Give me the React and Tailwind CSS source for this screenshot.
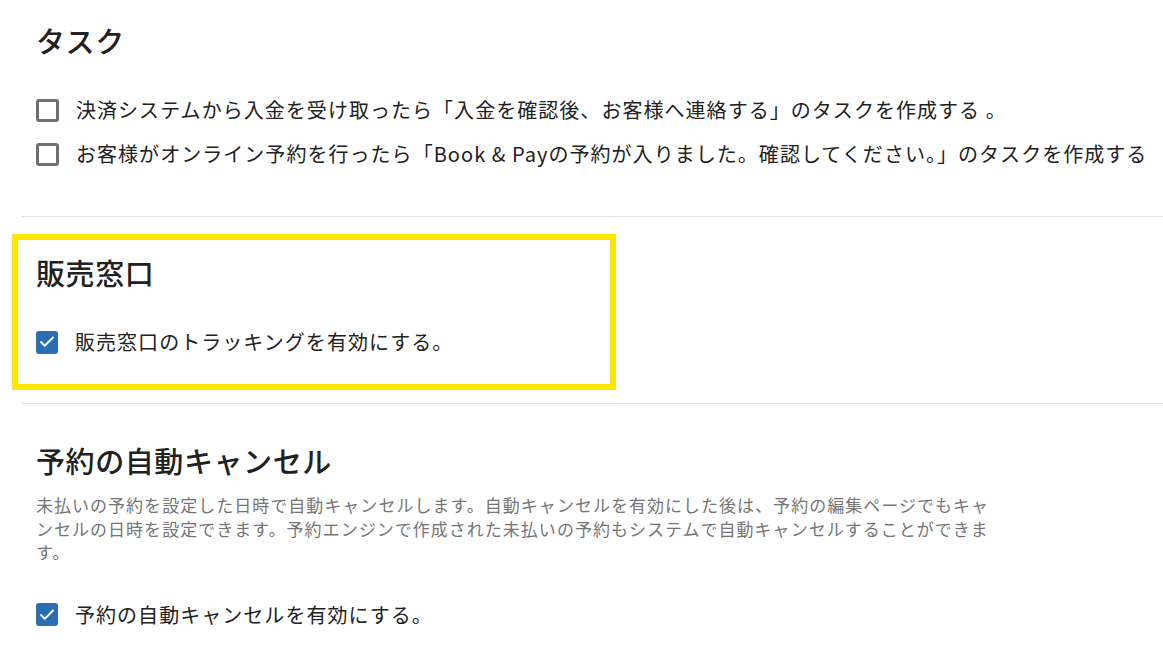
import { Check } from "lucide-react";

function Box({ checked }) {
  if (checked) {
    return (
      <span className="shrink-0 w-[22px] h-[23px] rounded-[3px] bg-[#2a6db3] flex items-center justify-center">
        <Check size={18} strokeWidth={2.5} className="text-white" />
      </span>
    );
  }
  return (
    <span className="shrink-0 w-[23px] h-[23px] rounded-[3px] border-[3px] border-[#6f6f6f] bg-white" />
  );
}

function Row({ checked, children }) {
  return (
    <label className="flex items-center gap-[17px] text-[20px] leading-[44px] tracking-[0.052em] text-[#212121]">
      <Box checked={checked} />
      <span>{children}</span>
    </label>
  );
}

export default function App() {
  return (
    <div
      className="w-[1163px] h-[661px] overflow-hidden bg-white"
      style={{ fontFamily: '"Noto Sans CJK JP", "Noto Sans", sans-serif' }}
    >
      {/* タスク */}
      <section className="pl-[36px] pt-[18px] pb-[40px]">
        <h2 className="text-[29px] leading-[44px] tracking-[0.02em] font-medium text-[#212121] mb-[26px]">タスク</h2>
        <Row>決済システムから入金を受け取ったら「入金を確認後、お客様へ連絡する」のタスクを作成する 。</Row>
        <Row>お客様がオンライン予約を行ったら「Book &amp; Payの予約が入りました。確認してください。」のタスクを作成する</Row>
      </section>
      <div className="ml-[21px] h-px bg-[#e0e0e0]" />

      {/* 販売窓口 */}
      <div className="pl-[12px] pt-[17px] pb-[13px]">
        <section className="w-[604px] border-[6px] border-[#ffe500] pl-[18px] pt-[10px] pb-[20px]">
          <h2 className="text-[29px] leading-[44px] tracking-[0.02em] font-medium text-[#212121] mb-[26px]">販売窓口</h2>
          <Row checked>販売窓口のトラッキングを有効にする。</Row>
        </section>
      </div>
      <div className="ml-[21px] h-px bg-[#e0e0e0]" />

      {/* 予約の自動キャンセル */}
      <section className="pl-[36px] pt-[34px]">
        <h2 className="text-[29px] leading-[44px] tracking-[0.02em] font-medium text-[#212121] mb-[11px]">予約の自動キャンセル</h2>
        <p className="w-[955px] text-[17px] leading-[23.5px] tracking-[0.06em] text-[#757575] mb-[29px]">
          未払いの予約を設定した日時で自動キャンセルします。自動キャンセルを有効にした後は、予約の編集ページでもキャンセルの日時を設定できます。予約エンジンで作成された未払いの予約もシステムで自動キャンセルすることができます。
        </p>
        <Row checked>予約の自動キャンセルを有効にする。</Row>
      </section>
    </div>
  );
}
